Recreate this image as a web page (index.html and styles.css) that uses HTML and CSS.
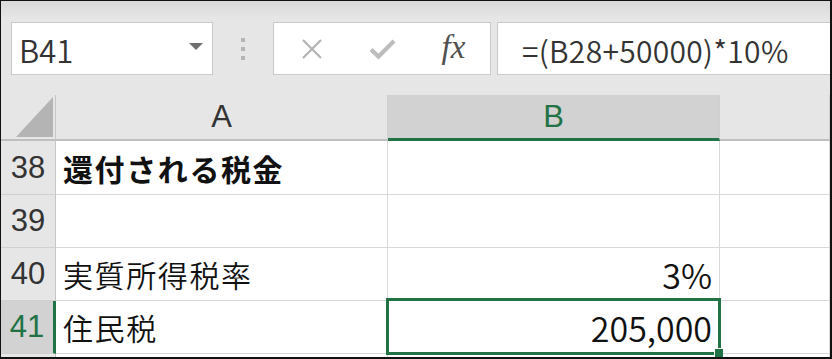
FILE: index.html
```html
<!DOCTYPE html>
<html lang="ja">

<head>
  <title>住民税 - Excel</title>
  <meta charset="UTF-8">
  <link rel="stylesheet" href="styles.css">
</head>

<body>
  <div class="ventana">
    <div class="barra">
      <div class="nombre">
        <span>B41</span>
        <svg class="flecha" width="14" height="7" viewBox="0 0 14 7">
          <path d="M0 0 L14 0 L7 7 Z" fill="#6f6f6f" />
        </svg>
      </div>
      <div class="separador"><i></i><i></i><i></i></div>
      <div class="botones">
        <span class="boton">
          <svg width="22" height="20" viewBox="0 0 22 20">
            <path d="M2 1 L20 19 M20 1 L2 19" stroke="#b3b3b3" stroke-width="2.2" fill="none" />
          </svg>
        </span>
        <span class="boton">
          <svg width="27" height="22" viewBox="0 0 27 22">
            <path d="M2 11.5 L9.5 18.5 L25 3" stroke="#bdbdbd" stroke-width="4.2" fill="none" />
          </svg>
        </span>
        <span class="boton fx">fx</span>
      </div>
      <div class="formula">=(B28+50000)*10%</div>
    </div>

    <div class="hoja">
      <div class="esquina"><span class="triangulo"></span></div>
      <div class="col">A</div>
      <div class="col activa">B</div>
      <div class="col"></div>

      <div class="fila">38</div>
      <div class="celda negrita">還付される税金</div>
      <div class="celda"></div>
      <div class="celda"></div>

      <div class="fila">39</div>
      <div class="celda"></div>
      <div class="celda"></div>
      <div class="celda"></div>

      <div class="fila">40</div>
      <div class="celda">実質所得税率</div>
      <div class="celda numero">3%</div>
      <div class="celda"></div>

      <div class="fila activa">41</div>
      <div class="celda">住民税</div>
      <div class="celda numero seleccion">205,000</div>
      <div class="celda"></div>

      <div class="fila"></div>
      <div class="celda"></div>
      <div class="celda"></div>
      <div class="celda"></div>
    </div>
  </div>
</body>

</html>
```

FILE: styles.css
```css
* {
  margin: 0;
  padding: 0;
  box-sizing: border-box;
}

body {
  font-family: 'Noto Sans CJK JP', sans-serif;
  color: #222;
  background: #fff;
}

.ventana {
  width: 832px;
  height: 359px;
  border-top: 1px solid #111;
  border-left: 1px solid #111;
  border-right: 2px solid #111;
  border-bottom: 2px solid #111;
  overflow: hidden;
  background: #e6e6e6;
}

/* barra de formulas */
.barra {
  height: 94px;
  padding-top: 21px;
  display: flex;
  align-items: flex-start;
  background: linear-gradient(#d9d9d9, #e6e6e6 18px);
}

.nombre {
  margin-left: 10px;
  width: 202px;
  height: 53px;
  background: #fff;
  border: 1px solid #c9c9c9;
  display: flex;
  align-items: center;
  justify-content: space-between;
  padding: 2px 9px 0 7px;
  font-size: 31px;
  font-weight: 350;
  color: #333;
}

.flecha {
  margin-top: -6px;
}

.separador {
  width: 60px;
  height: 53px;
  display: flex;
  flex-direction: column;
  align-items: center;
  justify-content: center;
  gap: 5px;
}

.separador i {
  width: 4px;
  height: 4px;
  background: #b5b5b5;
}

.botones {
  width: 218px;
  height: 53px;
  background: #fff;
  border: 1px solid #c9c9c9;
  display: flex;
  align-items: center;
  padding-left: 2px;
}

.boton {
  width: 71px;
  display: flex;
  justify-content: center;
  align-items: center;
}

.fx {
  font-family: 'Liberation Serif', serif;
  font-style: italic;
  font-size: 33px;
  color: #505050;
  padding-bottom: 3px;
}

.formula {
  margin-left: 6px;
  flex: 1;
  height: 53px;
  background: #fff;
  border: 1px solid #c9c9c9;
  border-right: none;
  padding: 2px 0 0 24px;
  display: flex;
  align-items: center;
  font-size: 30px;
  font-weight: 350;
  letter-spacing: 0.3px;
  color: #333;
}

/* hoja */
.hoja {
  display: grid;
  grid-template-columns: 55px 332px 332px 1fr;
  grid-template-rows: 46px 54px 53px 53px 53px 20px;
}

.esquina {
  border-right: 1px solid #c6c6c6;
  border-bottom: 2px solid #bfbfbf;
  display: flex;
  align-items: flex-end;
  justify-content: flex-end;
  padding: 0 2px 2px 0;
}

.triangulo {
  width: 37px;
  height: 40px;
  background: #b4b4b4;
  clip-path: polygon(100% 0, 100% 100%, 0 100%);
}

.col {
  border-right: 1px solid #d0d0d0;
  border-bottom: 2px solid #bfbfbf;
  display: flex;
  align-items: center;
  justify-content: center;
  font-family: 'Liberation Sans Narrow', 'Liberation Sans', sans-serif;
  font-size: 31px;
  color: #333;
}

.col:last-child {
  border-right: none;
}

.col.activa {
  background: #d2d2d2;
  color: #217346;
  border-bottom: 3px solid #217346;
}

.fila {
  border-right: 1px solid #c6c6c6;
  border-bottom: 1px solid #d0d0d0;
  display: flex;
  align-items: center;
  justify-content: center;
  font-family: 'Liberation Sans Narrow', 'Liberation Sans', sans-serif;
  font-size: 31px;
  color: #333;
}

.fila.activa {
  background: #d2d2d2;
  color: #217346;
  border-right: 3px solid #217346;
}

.celda {
  background: #fff;
  border-right: 1px solid #d9d9d9;
  border-bottom: 1px solid #d9d9d9;
  display: flex;
  align-items: center;
  padding: 0 7px;
  font-size: 30px;
  font-weight: 350;
  letter-spacing: 1.6px;
  color: #111;
}

.negrita {
  font-weight: bold;
}

.numero {
  justify-content: flex-end;
  font-size: 34px;
  letter-spacing: 0;
}

.seleccion {
  position: relative;
}

.seleccion::after {
  content: '';
  position: absolute;
  top: -3px;
  left: -2px;
  right: -2px;
  bottom: -2px;
  border: 3px solid #217346;
}

.seleccion::before {
  content: '';
  position: absolute;
  right: -4px;
  bottom: -4px;
  width: 8px;
  height: 8px;
  background: #217346;
  border: 1px solid #fff;
  border-right: none;
  border-bottom: none;
  z-index: 1;
}
```
